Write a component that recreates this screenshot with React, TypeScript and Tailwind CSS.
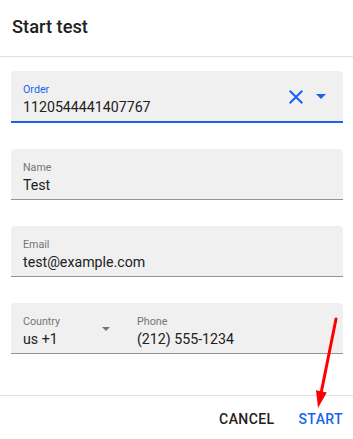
import React from "react";

const BLUE = "#1a62f0";

function Field({ label, value }: { label: string; value: string }) {
  return (
    <div className="bg-[#f0f0f0] rounded-t-[4px] border-b border-[#949494] px-3 pt-[12px] pb-[4px]">
      <div className="text-[10.7px] leading-[14px] text-[#757575]">{label}</div>
      <div className="text-[14.2px] leading-[19px] mt-[1px] text-[#212121]">{value}</div>
    </div>
  );
}

export default function App() {
  return (
    <div
      className="relative w-[353px] h-[439px] bg-white flex flex-col overflow-hidden"
      style={{ fontFamily: "Roboto, 'Liberation Sans', sans-serif" }}
    >
      <div className="h-[57px] border-b border-[#e0e0e0] px-[12px] pt-[11px] shrink-0">
        <div className="text-[18.3px] font-medium leading-[32px] text-[#212121]">Start test</div>
      </div>

      <div className="flex-1 flex flex-col gap-[26px] ml-[11px] mr-[10px] pt-[14px]">
        {/* Order (focused) */}
        <div className="bg-[#f0f0f0] rounded-t-[4px] border-b-2 border-[#1a62f0] flex items-start pl-3 pr-[17px] pt-[11px] pb-[4px]">
          <div className="flex-1 pt-[1px]">
            <div className="text-[10.7px] leading-[14px] text-[#1a62f0]">Order</div>
            <div className="text-[14.2px] leading-[19px] mt-[1px] text-[#212121]">1120544441407767</div>
          </div>
          <svg width="24" height="24" viewBox="0 0 24 24" className="mt-[3px]">
            <path
              fill={BLUE}
              d="M19 6.41L17.59 5 12 10.59 6.41 5 5 6.41 10.59 12 5 17.59 6.41 19 12 13.41 17.59 19 19 17.59 13.41 12z"
            />
          </svg>
          <svg width="10" height="5" viewBox="7 10 10 5" className="mt-[12px] ml-[8px]">
            <path fill={BLUE} d="M7 10l5 5 5-5z" />
          </svg>
        </div>

        <Field label="Name" value="Test" />
        <Field label="Email" value="test@example.com" />

        {/* Country + Phone */}
        <div className="bg-[#f0f0f0] rounded-t-[4px] border-b border-[#949494] flex items-start pt-[12px] pb-[4px]">
          <div className="w-[114px] flex items-start pl-3">
            <div className="flex-1">
              <div className="text-[10.7px] leading-[14px] text-[#757575]">Country</div>
              <div className="text-[14.2px] leading-[19px] mt-[1px] text-[#212121]">us +1</div>
            </div>
            <svg width="8" height="4" viewBox="7 10 10 5" className="mt-[12px] mr-[15px]" preserveAspectRatio="none">
              <path fill="#757575" d="M7 10l5 5 5-5z" />
            </svg>
          </div>
          <div className="flex-1 pl-3">
            <div className="text-[10.7px] leading-[14px] text-[#757575]">Phone</div>
            <div className="text-[14.2px] leading-[19px] mt-[1px] text-[#212121]">(212) 555-1234</div>
          </div>
        </div>
      </div>

      <div className="h-[44px] border-t border-[#e0e0e0] shrink-0 flex justify-end items-start gap-[24px] pr-[10px] pt-[11px]">
        <div className="text-[14px] font-medium uppercase tracking-[0.4px] leading-[24.5px] text-[#212121]">Cancel</div>
        <div className="text-[14px] font-medium uppercase tracking-[0.4px] leading-[24.5px] text-[#1a62f0]">Start</div>
      </div>

      <svg className="absolute left-0 top-0 pointer-events-none" width="353" height="439">
        <line x1="336" y1="319" x2="321.4" y2="391.5" stroke="#ff0000" strokeWidth="3" strokeLinecap="round" />
        <polygon points="318,408 326.8,392.4 316,390.2" fill="#ff0000" />
      </svg>
    </div>
  );
}
